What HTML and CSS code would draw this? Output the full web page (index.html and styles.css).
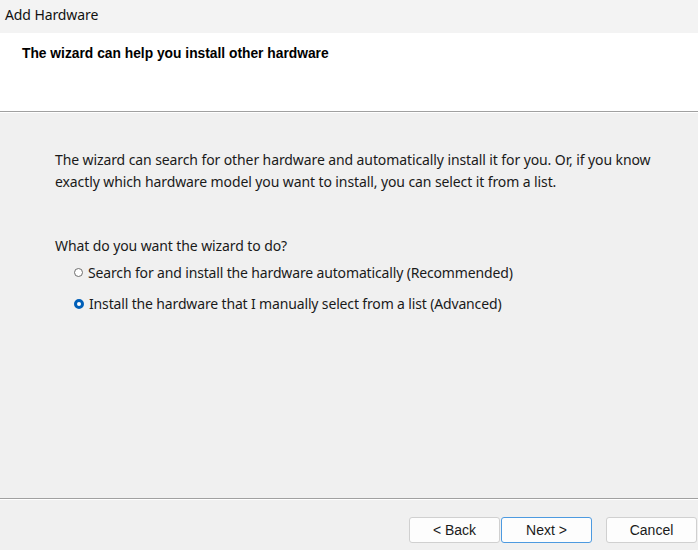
FILE: index.html
```html
<!DOCTYPE html>
<html>
<head>
  <title>Add Hardware</title>
  <link rel="stylesheet" href="styles.css">
</head>
<body>
  <div class="titlebar">Add Hardware</div>

  <div class="header">
    <h1>The wizard can help you install other hardware</h1>
  </div>

  <div class="content">
    <p class="intro">The wizard can search for other hardware and automatically install it for you. Or, if you know exactly which hardware model you want to install, you can select it from a list.</p>

    <p class="question">What do you want the wizard to do?</p>

    <label class="option">
      <input type="radio" name="mode">
      <span class="radio"></span>
      Search for and install the hardware automatically (Recommended)
    </label>
    <label class="option">
      <input type="radio" name="mode" checked>
      <span class="radio"></span>
      Install the hardware that I manually select from a list (Advanced)
    </label>
  </div>

  <div class="footer">
    <button class="button">&lt; Back</button>
    <button class="button default">Next &gt;</button>
    <button class="button cancel">Cancel</button>
  </div>
</body>
</html>
```

FILE: styles.css
```css
/* Dialog frame */
body {
  margin: 0;
  padding: 0;
  width: 698px;
  height: 550px;
  overflow: hidden;
  background-color: #f0f0f0;
  font-family: "Noto Sans", "Open Sans", sans-serif;
  color: #1a1a1a;
}

.titlebar {
  height: 33px;
  line-height: 29px;
  padding-left: 5px;
  background-color: #f3f3f3;
  font-size: 14px;
  letter-spacing: -0.1px;
  color: #111;
}

/* White header area */
.header {
  height: 78px;
  background-color: #ffffff;
  border-bottom: 1px solid #a0a0a0;
}

.header h1 {
  margin: 0;
  padding: 13px 0 0 22px;
  font-family: "Liberation Sans", Arial, sans-serif;
  font-size: 13.8px;
  font-weight: bold;
  color: #000;
}

/* Main body */
.content {
  height: 387px;
  padding: 36px 0 0 55px;
  border-top: 1px solid #ffffff;
  border-bottom: 1px solid #a0a0a0;
  box-sizing: border-box;
}

.intro {
  margin: 0;
  width: 620px;
  font-size: 14px;
  letter-spacing: -0.1px;
  line-height: 22px;
}

.question {
  margin: 42px 0 0 0;
  font-size: 14px;
  letter-spacing: -0.1px;
  line-height: 22px;
}

.option {
  display: flex;
  align-items: center;
  height: 31px;
  padding-left: 19px;
  font-size: 14px;
  letter-spacing: -0.15px;
}

.option input {
  display: none;
}

.radio {
  width: 9px;
  height: 9px;
  margin-right: 5px;
  border: 1px solid #6d6d6d;
  border-radius: 50%;
  background-color: #fff;
  box-sizing: border-box;
}

.option input:checked + .radio {
  border: 3px solid #005fb8;
  width: 10px;
  height: 10px;
}

/* Bottom buttons */
.footer {
  border-top: 1px solid #ffffff;
  display: flex;
  padding: 17px 0 0 409px;
}

.button {
  width: 92px;
  height: 26px;
  margin-right: 1px;
  background-color: #fdfdfd;
  border: 1px solid #d0d0d0;
  border-radius: 3px;
  font-family: "Liberation Sans", Arial, sans-serif;
  font-size: 14px;
  color: #1a1a1a;
  cursor: pointer;
}

.button.default {
  border-color: #4d9ae0;
}

.button.cancel {
  margin-left: 13px;
}
```
